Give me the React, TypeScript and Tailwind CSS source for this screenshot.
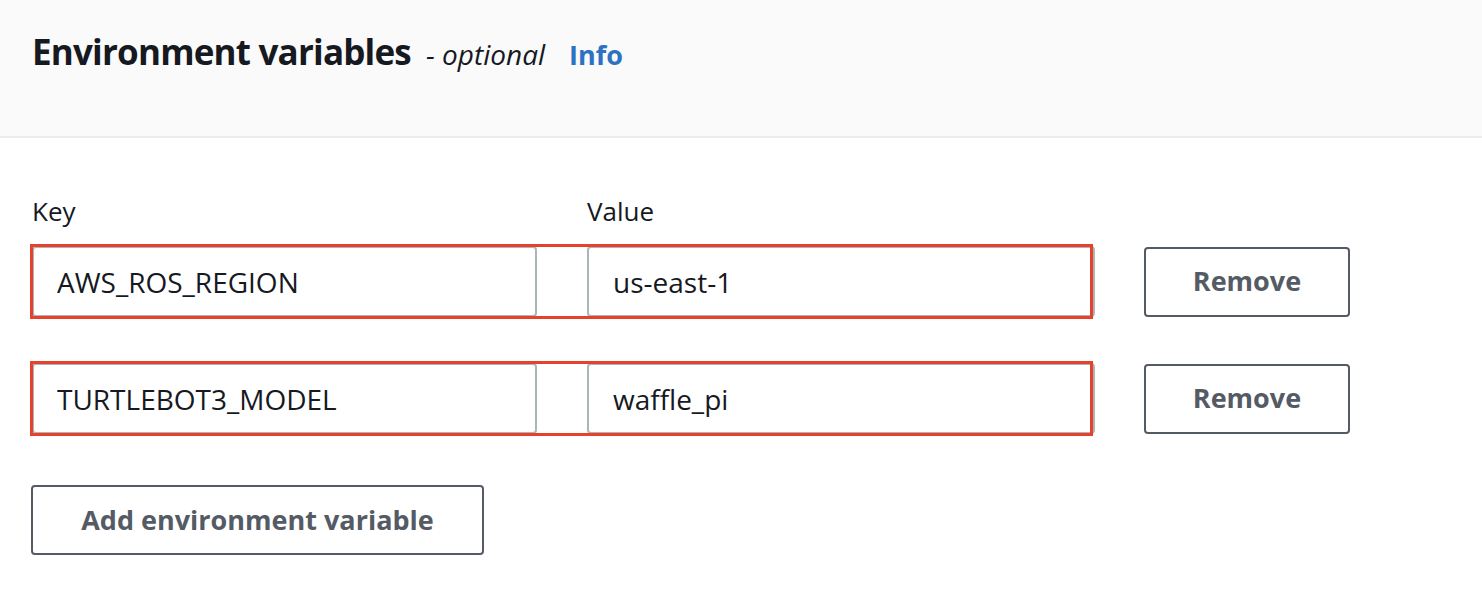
const rows = [
  { key: "AWS_ROS_REGION", value: "us-east-1" },
  { key: "TURTLEBOT3_MODEL", value: "waffle_pi" },
];

const font = { fontFamily: "'Open Sans', 'Noto Sans', sans-serif" };

export default function App() {
  return (
    <div className="w-[1482px] h-[590px] bg-white text-[#16191f]" style={font}>
      {/* Header */}
      <div className="h-[138px] bg-[#fafafa] border-b-2 border-[#eaeded] pl-[32px] pt-[28px]">
        <div className="flex items-baseline">
          <h2 className="text-[35px] font-bold tracking-[-0.8px] leading-[48px]">Environment variables</h2>
          <span className="ml-[15px] text-[28px] italic">- optional</span>
          <a className="ml-[24px] text-[27px] font-bold text-[#2d72c2]">Info</a>
        </div>
      </div>

      {/* Body */}
      <div className="pl-[32px] pt-[56px]">
        <div className="grid grid-cols-[505px_508px] gap-x-[50px] text-[26px] leading-[34px] mb-[18px]">
          <div>Key</div>
          <div>Value</div>
        </div>

        <div className="flex flex-col gap-[46px]">
          {rows.map((r) => (
            <div key={r.key} className="flex items-center">
              <div className="relative grid grid-cols-[505px_508px] gap-x-[50px]">
                <input
                  readOnly
                  value={r.key}
                  className="h-[71px] border-2 border-[#aab7b8] rounded-[4px] px-[23px] text-[28px] text-[#16191f] outline-none"
                  style={font}
                />
                <input
                  readOnly
                  value={r.value}
                  className="h-[71px] border-2 border-[#aab7b8] rounded-[4px] px-[24px] text-[28px] text-[#16191f] outline-none"
                  style={font}
                />
                {/* annotation highlight */}
                <div className="absolute left-[-2px] right-[2px] top-[-2px] bottom-[-2px] border-[3px] border-[#e8412b] pointer-events-none" />
              </div>
              <button className="ml-[49px] w-[206px] h-[70px] border-2 border-[#545b64] rounded-[4px] text-[27px] font-bold text-[#545b64]">
                Remove
              </button>
            </div>
          ))}
        </div>

        <button className="mt-[51px] -ml-[1px] w-[453px] h-[70px] border-2 border-[#545b64] rounded-[4px] text-[27px] font-bold text-[#545b64]">
          Add environment variable
        </button>
      </div>
    </div>
  );
}
